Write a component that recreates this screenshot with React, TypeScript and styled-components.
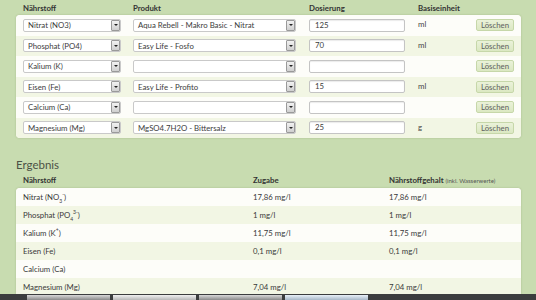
import React from "react";
import styled, { createGlobalStyle } from "styled-components";

const GlobalStyle = createGlobalStyle`
  html, body {
    margin: 0;
    padding: 0;
    background: #c8dcb0;
  }
  body {
    font-family: Lato, "Open Sans", sans-serif;
    color: #3a3a3a;
  }
`;

const Page = styled.div`
  width: 536px;
  height: 300px;
  display: flex;
  flex-direction: column;
  overflow: hidden;
  background: #c8dcb0;
`;

const Content = styled.div`
  flex: 1;
  overflow: hidden;
  padding: 0 15px 0 16px;
`;

const COLS = "110px 176px 109px 58px 38px";

const HeadRow = styled.div`
  display: grid;
  grid-template-columns: ${COLS};
  padding-left: 7px;
  height: 15px;
  align-items: center;
  font-size: 7.8px;
  font-weight: 700;
  color: #333;
`;

const Panel = styled.div`
  background: #fdfdf9;
  border-radius: 4px;
  box-shadow: 0 0 2px rgba(90, 110, 60, 0.35);
  overflow: hidden;
`;

const FormRow = styled.div<{ $alt?: boolean }>`
  display: grid;
  grid-template-columns: ${COLS};
  padding-left: 7px;
  height: 20.5px;
  align-items: center;
  background: ${(p) => (p.$alt ? "#f2f6e4" : "#fdfdf9")};
`;

const Select = styled.div<{ $w: number }>`
  width: ${(p) => p.$w}px;
  height: 13px;
  box-sizing: border-box;
  border: 1px solid #c9c9c9;
  border-radius: 2px;
  background: #fff;
  display: flex;
  align-items: center;
  justify-content: space-between;
  padding-left: 4px;
  font-size: 7.8px;
  color: #3c3c3c;
  white-space: nowrap;
`;

const Arrow = styled.span`
  width: 9px;
  height: 11px;
  box-sizing: border-box;
  border: 1px solid #9a9a9a;
  border-radius: 1px;
  background: linear-gradient(#f2f2f2, #cfcfcf);
  display: flex;
  align-items: center;
  justify-content: center;
  &::after {
    content: "";
    border-left: 2px solid transparent;
    border-right: 2px solid transparent;
    border-top: 2px solid #222;
  }
`;

const Input = styled.div`
  width: 96px;
  height: 13px;
  box-sizing: border-box;
  border: 1px solid #c4c4c4;
  border-radius: 2px;
  background: #fff;
  box-shadow: inset 0 1px 1px rgba(0, 0, 0, 0.08);
  padding-left: 5px;
  font-size: 7.8px;
  line-height: 11px;
  color: #3c3c3c;
`;

const Unit = styled.span`
  font-size: 7.8px;
  color: #444;
  align-self: start;
  margin-top: 4px;
`;

const Button = styled.button`
  width: 38px;
  height: 12px;
  padding: 0;
  border: 1px solid #c6d7a9;
  border-radius: 2px;
  background: linear-gradient(#eaf2d9, #dbe8c2);
  font-family: inherit;
  font-size: 7.8px;
  color: #606060;
`;

const Heading = styled.h2`
  margin: 20px 0 0;
  height: 14px;
  line-height: 14px;
  font-size: 11.5px;
  font-weight: 400;
  color: #4c5246;
`;

const TCOLS = "230px 136px 1fr";

const THead = styled.div`
  display: grid;
  grid-template-columns: ${TCOLS};
  padding-left: 7px;
  height: 16px;
  align-items: center;
  font-size: 7.8px;
  font-weight: 700;
  color: #333;
`;

const Small = styled.span`
  font-weight: 400;
  font-size: 6px;
  color: #555;
`;

const TRow = styled.div<{ $alt?: boolean }>`
  display: grid;
  grid-template-columns: ${TCOLS};
  padding-left: 7px;
  height: 18px;
  align-items: center;
  font-size: 7.8px;
  color: #3a3a3a;
  background: ${(p) => (p.$alt ? "#f2f6e4" : "#fdfdf9")};
`;

const Chem = styled.span`
  sub, sup {
    font-size: 5px;
    line-height: 0;
  }
`;

const TaskBar = styled.div`
  height: 6px;
  background: #3b3d3e;
  display: flex;
  padding-left: 27px;
  gap: 3px;
  align-items: flex-end;
`;

const TaskItem = styled.div<{ $tone: string }>`
  width: 83px;
  height: 5px;
  background: ${(p) => p.$tone};
`;

const entries = [
  { n: "Nitrat (NO3)", p: "Aqua Rebell - Makro Basic - Nitrat", d: "125", u: "ml" },
  { n: "Phosphat (PO4)", p: "Easy Life - Fosfo", d: "70", u: "ml" },
  { n: "Kalium (K)", p: "", d: "", u: "" },
  { n: "Eisen (Fe)", p: "Easy Life - Profito", d: "15", u: "ml" },
  { n: "Calcium (Ca)", p: "", d: "", u: "" },
  { n: "Magnesium (Mg)", p: "MgSO4.7H2O - Bittersalz", d: "25", u: "g" },
];

const results: { n: React.ReactNode; z: string; g: string }[] = [
  { n: <>Nitrat (NO<sub>3</sub><sup>-</sup>)</>, z: "17,86 mg/l", g: "17,86 mg/l" },
  { n: <>Phosphat (PO<sub>4</sub><sup>3-</sup>)</>, z: "1 mg/l", g: "1 mg/l" },
  { n: <>Kalium (K<sup>+</sup>)</>, z: "11,75 mg/l", g: "11,75 mg/l" },
  { n: "Eisen (Fe)", z: "0,1 mg/l", g: "0,1 mg/l" },
  { n: "Calcium (Ca)", z: "", g: "" },
  { n: "Magnesium (Mg)", z: "7,04 mg/l", g: "7,04 mg/l" },
];

export default function App() {
  return (
    <Page>
      <GlobalStyle />
      <Content>
        <HeadRow>
          <span>Nährstoff</span>
          <span>Produkt</span>
          <span>Dosierung</span>
          <span>Basiseinheit</span>
        </HeadRow>
        <Panel>
          {entries.map((e, i) => (
            <FormRow key={i} $alt={i % 2 === 1}>
              <Select $w={98}>
                <span>{e.n}</span>
                <Arrow />
              </Select>
              <Select $w={163}>
                <span>{e.p}</span>
                <Arrow />
              </Select>
              <Input>{e.d}</Input>
              <Unit>{e.u}</Unit>
              <Button>Löschen</Button>
            </FormRow>
          ))}
        </Panel>
        <Heading>Ergebnis</Heading>
        <THead>
          <span>Nährstoff</span>
          <span>Zugabe</span>
          <span>
            Nährstoffgehalt <Small>(inkl. Wasserwerte)</Small>
          </span>
        </THead>
        <Panel>
          {results.map((r, i) => (
            <TRow key={i} $alt={i % 2 === 1}>
              <Chem>{r.n}</Chem>
              <span>{r.z}</span>
              <span>{r.g}</span>
            </TRow>
          ))}
        </Panel>
      </Content>
      <TaskBar>
        <TaskItem $tone="linear-gradient(#d8d8d8, #8a8a8a)" />
        <TaskItem $tone="linear-gradient(#f0f0f0, #b8b8b8)" />
        <TaskItem $tone="linear-gradient(#d8d8d8, #8a8a8a)" />
        <TaskItem $tone="linear-gradient(#e8f0f8, #a8b8c8)" />
      </TaskBar>
    </Page>
  );
}
